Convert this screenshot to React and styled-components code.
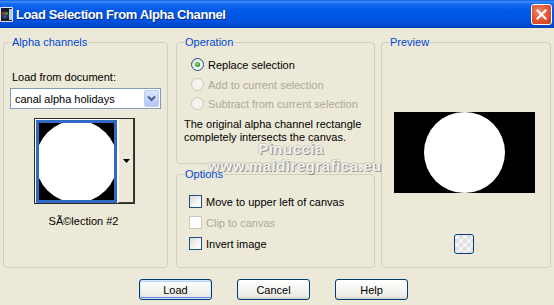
import React from 'react'
import styled, { createGlobalStyle } from 'styled-components'

const Global = createGlobalStyle`
  html, body {
    margin: 0;
    padding: 0;
    background: #ece9d8;
  }
  body {
    font-family: "Liberation Sans", Arial, sans-serif;
    font-size: 11px;
    color: #000;
  }
`

const Window = styled.div`
  position: relative;
  width: 554px;
  height: 305px;
  background: #ece9d8;
  overflow: hidden;
`

const TitleBar = styled.div`
  display: flex;
  align-items: center;
  height: 28px;
  padding-right: 2px;
  background: linear-gradient(
    to bottom,
    #0a5ce8 0%,
    #3c8cf9 6%,
    #1668ee 14%,
    #0058e6 40%,
    #0055e2 70%,
    #0049d0 90%,
    #0040b8 100%
  );
`

const TitleIcon = styled.svg`
  flex: none;
  margin: 0 3px 0 0;
`

const TitleText = styled.div`
  flex: 1;
  color: #fff;
  font-weight: bold;
  font-size: 13px;
  letter-spacing: -0.4px;
  text-shadow: 1px 1px 0 #0a2a8a;
`

const CloseButton = styled.div`
  width: 19px;
  height: 19px;
  border: 1px solid #fff;
  border-radius: 3px;
  background: radial-gradient(circle at 40% 35%, #f0876a 0%, #e0542f 55%, #c53a1a 100%);
  display: flex;
  align-items: center;
  justify-content: center;
`

const Body = styled.div`
  display: flex;
  flex-direction: column;
  padding: 8px 5px 0 3px;
`

const Columns = styled.div`
  display: grid;
  grid-template-columns: 165px 199px 168px;
  column-gap: 8px;
  height: 232px;

  & > :nth-child(3) {
    margin-left: -2px;
  }
`

const Stack = styled.div`
  display: flex;
  flex-direction: column;
  gap: 4px;
`

const Group = styled.fieldset`
  margin: 0;
  padding: 0 8px 0 8px;
  border: 1px solid #d0d0bf;
  border-radius: 4px;
  min-width: 0;
  height: ${p => p.$h}px;
  box-sizing: border-box;
  display: flex;
  flex-direction: column;
`

const Legend = styled.legend`
  color: #0046d5;
  padding: 0 1px;
  margin-left: -1px;
  line-height: 13px;
`

const Label = styled.div`
  line-height: 13px;
  margin-top: ${p => p.$mt || 0}px;
`

const Select = styled.div`
  margin: 4px 0 0 -2px;
  width: 149px;
  height: 19px;
  border: 1px solid #7f9db9;
  background: #fff;
  display: flex;
  align-items: center;
`

const SelectText = styled.div`
  flex: 1;
  padding-left: 4px;
`

const SelectButton = styled.div`
  width: 15px;
  height: 17px;
  margin-right: 1px;
  border-radius: 2px;
  background: linear-gradient(to bottom, #dbe6fd 0%, #c1d3fb 60%, #b2c6f5 100%);
  border: 1px solid #b9cdf6;
  box-sizing: border-box;
  display: flex;
  align-items: center;
  justify-content: center;
`

const ThumbRow = styled.div`
  display: flex;
  justify-content: center;
  margin: 9px 0 0 -2px;
`

const Thumb = styled.div`
  display: flex;
  width: 101px;
  height: 86px;
  border: 1px solid #2b2b2b;
  box-sizing: border-box;
  background: #fff;
  padding: 1px 0 0 1px;
`

const ThumbImage = styled.div`
  width: 75px;
  height: 77px;
  border: 3px solid #316ac5;
  background: #000;
  display: flex;
`

const ThumbArrow = styled.div`
  flex: 1;
  margin: -1px 0 0 1px;
  background: #ece9d8;
  border-left: 1px solid #fff;
  border-right: 1px solid #404040;
  border-bottom: 1px solid #404040;
  display: flex;
  align-items: center;
  justify-content: center;
`

const Caption = styled.div`
  text-align: center;
  margin: 11px 0 0 -4px;
`

const Option = styled.div`
  display: flex;
  align-items: center;
  gap: 4px;
  height: 13px;
  margin-top: ${p => p.$mt}px;
  margin-left: ${p => p.$ml || 0}px;
  color: ${p => (p.$disabled ? '#aca899' : '#000')};
`

const Radio = styled.div`
  width: 11px;
  height: 11px;
  border-radius: 50%;
  border: 1px solid ${p => (p.$disabled ? '#cac8bb' : '#1c5180')};
  background: ${p =>
    p.$disabled ? '#f4f3ee' : 'linear-gradient(135deg, #dcdcd5 0%, #f5f5f2 60%, #fff 100%)'};
  display: flex;
  align-items: center;
  justify-content: center;
`

const RadioDot = styled.div`
  width: 5px;
  height: 5px;
  border-radius: 50%;
  background: radial-gradient(circle at 40% 40%, #8ee88e 0%, #21a121 60%, #178017 100%);
`

const Check = styled.div`
  width: 11px;
  height: 11px;
  border: 1px solid ${p => (p.$disabled ? '#cac8bb' : '#1c5180')};
  background: ${p =>
    p.$disabled ? '#fff' : 'linear-gradient(135deg, #dcdcd5 0%, #f5f5f2 60%, #fff 100%)'};
`

const Note = styled.div`
  line-height: 13px;
  margin-top: 8px;
  margin-left: -1px;
`

const PreviewArea = styled.div`
  display: flex;
  flex-direction: column;
  align-items: center;
  margin-left: -4px;
`

const PreviewImage = styled.div`
  margin-top: 63px;
  width: 141px;
  height: 81px;
  background: #000;
  display: flex;
  justify-content: center;
`

const PreviewToggle = styled.div`
  margin-top: 41px;
  width: 18px;
  height: 18px;
  border: 1px solid #003c74;
  border-radius: 3px;
  background-color: #f4f4f4;
  background-image: linear-gradient(45deg, #e0e0e0 25%, transparent 25%, transparent 75%, #e0e0e0 75%),
    linear-gradient(45deg, #e0e0e0 25%, transparent 25%, transparent 75%, #e0e0e0 75%);
  background-size: 8px 8px;
  background-position: 0 0, 4px 4px;
`

const Buttons = styled.div`
  display: flex;
  gap: 25px;
  padding-left: 136px;
  margin-top: 11px;
`

const Button = styled.div`
  width: 73px;
  height: 21px;
  box-sizing: border-box;
  border: 1px solid #003c74;
  border-radius: 3px;
  display: flex;
  align-items: center;
  justify-content: center;
  background: linear-gradient(to bottom, #fff 0%, #f4f4f0 50%, #ecebe6 85%, #d6d0c5 100%);
  box-shadow: ${p =>
    p.$default
      ? 'inset 0 0 0 1px #cee7ff, inset 0 -1px 0 1px #6982ee, inset 0 1px 0 1px #bcd4f6'
      : 'none'};
`

/* watermark stamped over the screenshot */
const Watermark = styled.div`
  position: absolute;
  left: 200px;
  top: 141px;
  width: 190px;
  display: flex;
  flex-direction: column;
  align-items: center;
  gap: 1px;
  font-family: "Liberation Sans", Arial, sans-serif;
  font-weight: bold;
  font-size: 15px;
  line-height: 16px;
  letter-spacing: 0.5px;
  color: rgba(255, 255, 255, 0.88);
  text-shadow: 1px 1px 0 rgba(110, 110, 100, 0.7), -1px 0 0 rgba(170, 170, 160, 0.5),
    0 -1px 0 rgba(170, 170, 160, 0.5);
  pointer-events: none;
`

const WatermarkLine = styled.div`
  margin-left: ${p => p.$ml || 0}px;
`

export default function App() {
  return (
    <>
      <Global />
      <Window>
        <TitleBar>
          <TitleIcon width="13" height="15" viewBox="0 0 13 15">
            <rect x="0" y="0" width="13" height="15" rx="1" fill="#dfe6f0" />
            <rect x="1" y="1" width="11" height="13" fill="#1a1a2a" />
            <circle cx="5" cy="8" r="4" fill="#303040" />
            <circle cx="3.5" cy="6.5" r="1.3" fill="#e03030" />
            <circle cx="6.5" cy="6.5" r="1.3" fill="#30c040" />
            <circle cx="5" cy="9.5" r="1.3" fill="#3060e0" />
            <rect x="9" y="2" width="3" height="11" fill="#b8c8e8" />
          </TitleIcon>
          <TitleText>Load Selection From Alpha Channel</TitleText>
          <CloseButton>
            <svg width="11" height="11" viewBox="0 0 11 11">
              <path d="M1.5 1.5 L9.5 9.5 M9.5 1.5 L1.5 9.5" stroke="#fff" strokeWidth="2.2" strokeLinecap="square" />
            </svg>
          </CloseButton>
        </TitleBar>

        <Body>
          <Columns>
            <Group $h={232}>
              <Legend>Alpha channels</Legend>
              <Label $mt={22}>Load from document:</Label>
              <Select>
                <SelectText>canal alpha holidays</SelectText>
                <SelectButton>
                  <svg width="9" height="7" viewBox="0 0 9 7">
                    <path d="M1 1.5 L4.5 5 L8 1.5" stroke="#4d6185" strokeWidth="2" fill="none" />
                  </svg>
                </SelectButton>
              </Select>
              <ThumbRow>
                <Thumb>
                  <ThumbImage>
                    <svg width="75" height="77" viewBox="0 0 75 77">
                      <rect width="75" height="77" fill="#000" />
                      <circle cx="37.5" cy="38.5" r="41" fill="#fff" />
                    </svg>
                  </ThumbImage>
                  <ThumbArrow>
                    <svg width="7" height="4" viewBox="0 0 7 4">
                      <path d="M0 0 L7 0 L3.5 4 Z" fill="#000" />
                    </svg>
                  </ThumbArrow>
                </Thumb>
              </ThumbRow>
              <Caption>SÃ©lection #2</Caption>
            </Group>

            <Stack>
              <Group $h={128}>
                <Legend>Operation</Legend>
                <Option $mt={9} $ml={6}>
                  <Radio>
                    <RadioDot />
                  </Radio>
                  Replace selection
                </Option>
                <Option $mt={7} $ml={6} $disabled>
                  <Radio $disabled />
                  Add to current selection
                </Option>
                <Option $mt={6} $ml={6} $disabled>
                  <Radio $disabled />
                  Subtract from current selection
                </Option>
                <Note>
                  The original alpha channel rectangle
                  <br />
                  completely intersects the canvas.
                </Note>
              </Group>
              <Group $h={100}>
                <Legend>Options</Legend>
                <Option $mt={14} $ml={4}>
                  <Check />
                  Move to upper left of canvas
                </Option>
                <Option $mt={8} $ml={4} $disabled>
                  <Check $disabled />
                  Clip to canvas
                </Option>
                <Option $mt={8} $ml={4}>
                  <Check />
                  Invert image
                </Option>
              </Group>
            </Stack>

            <Group $h={232}>
              <Legend>Preview</Legend>
              <PreviewArea>
                <PreviewImage>
                  <svg width="81" height="81" viewBox="0 0 81 81">
                    <circle cx="40.5" cy="40.5" r="40.5" fill="#fff" />
                  </svg>
                </PreviewImage>
                <PreviewToggle />
              </PreviewArea>
            </Group>
          </Columns>

          <Buttons>
            <Button $default>Load</Button>
            <Button>Cancel</Button>
            <Button>Help</Button>
          </Buttons>
        </Body>

        <Watermark>
          <WatermarkLine $ml={-8}>Pinuccia</WatermarkLine>
          <WatermarkLine>www.maldiregrafica.eu</WatermarkLine>
        </Watermark>
      </Window>
    </>
  )
}
